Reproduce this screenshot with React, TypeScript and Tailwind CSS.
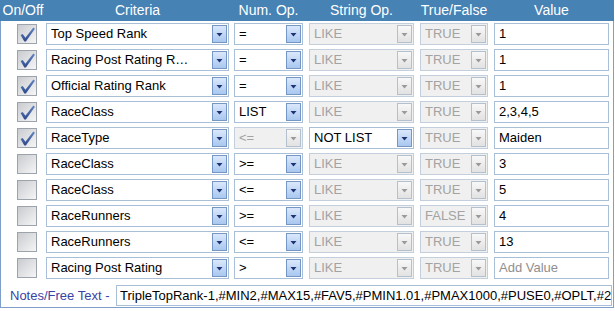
import clsx from "clsx";

type Row = {
  on: boolean;
  criteria: string;
  num: string;
  numOff?: boolean;
  str: string;
  strOn?: boolean;
  tf: string;
  value: string;
};

const rows: Row[] = [
  { on: true, criteria: "Top Speed Rank", num: "=", str: "LIKE", tf: "TRUE", value: "1" },
  { on: true, criteria: "Racing Post Rating R\u2026", num: "=", str: "LIKE", tf: "TRUE", value: "1" },
  { on: true, criteria: "Official Rating Rank", num: "=", str: "LIKE", tf: "TRUE", value: "1" },
  { on: true, criteria: "RaceClass", num: "LIST", str: "LIKE", tf: "TRUE", value: "2,3,4,5" },
  { on: true, criteria: "RaceType", num: "<=", numOff: true, str: "NOT LIST", strOn: true, tf: "TRUE", value: "Maiden" },
  { on: false, criteria: "RaceClass", num: ">=", str: "LIKE", tf: "TRUE", value: "3" },
  { on: false, criteria: "RaceClass", num: "<=", str: "LIKE", tf: "TRUE", value: "5" },
  { on: false, criteria: "RaceRunners", num: ">=", str: "LIKE", tf: "FALSE", value: "4" },
  { on: false, criteria: "RaceRunners", num: "<=", str: "LIKE", tf: "TRUE", value: "13" },
  { on: false, criteria: "Racing Post Rating", num: ">", str: "LIKE", tf: "TRUE", value: "" },
];

function Checkbox({ checked }: { checked: boolean }) {
  return (
    <div className="relative h-[20px] w-[20px] border border-[#9da3ab] bg-gradient-to-br from-[#c9cbcf] to-[#f6f6f7]">
      {checked && (
        <svg className="absolute left-[1px] top-[1px]" width="17" height="17" viewBox="0 0 16 16">
          <defs>
            <linearGradient id="ck" x1="0" y1="0" x2="0" y2="1">
              <stop offset="0" stopColor="#6484c4" />
              <stop offset="1" stopColor="#2c4a8c" />
            </linearGradient>
          </defs>
          <path d="M1.5 8.5 L3.5 7.5 L6 11 L13.5 1.5 L15 2.5 L6.5 14.5 L5 14.5 Z" fill="url(#ck)" />
        </svg>
      )}
    </div>
  );
}

function Select({ value, disabled, className }: { value: string; disabled?: boolean; className?: string }) {
  return (
    <div
      className={clsx(
        "flex h-[22px] items-center border pl-[4px] pr-[1px]",
        disabled ? "border-[#c4cfdd] bg-[#f0f0f0] text-[#a3a3a3]" : "border-[#a9bfd8] bg-white text-black",
        className
      )}
    >
      <span className="flex-1 overflow-hidden whitespace-nowrap">{value}</span>
      <span
        className={clsx(
          "flex h-[18px] w-[15px] items-center justify-center border",
          disabled
            ? "border-[#b3c0d0] bg-gradient-to-b from-[#f8f8f8] to-[#e2e2e2]"
            : "border-[#7597c8] bg-gradient-to-b from-[#dbe8fb] to-[#a9c7ef]"
        )}
      >
        <svg width="7" height="4" viewBox="0 0 7 4" className="mt-[2px]">
          <path d="M0.5 0h6L3.5 3.5z" fill={disabled ? "#9a9a9a" : "#1d3475"} />
        </svg>
      </span>
    </div>
  );
}

function TextBox({ value }: { value: string }) {
  return (
    <div className="flex h-[22px] w-[115px] items-center border border-[#a9bfd8] bg-white pl-[4px]">
      {value ? <span className="text-black">{value}</span> : <span className="text-[#8f8f8f]">Add Value</span>}
    </div>
  );
}

export default function App() {
  return (
    <div className="h-[311px] w-[615px] bg-white font-['Liberation_Sans',Arial,sans-serif] text-[13px]">
      <div className="w-[614px] border-x border-b border-[#7f9fca]">
        <div className="-mx-px flex h-[21px] items-center bg-[#4682b4] text-[14px] text-white">
          <div className="w-[46px] text-center">On/Off</div>
          <div className="w-[183px] text-center">Criteria</div>
          <div className="ml-[5px] w-[69px] text-center">Num. Op.</div>
          <div className="ml-[6px] w-[105px] text-center">String Op.</div>
          <div className="ml-[6px] w-[68px] text-center">True/False</div>
          <div className="ml-[6px] w-[115px] text-center">Value</div>
        </div>
        {rows.map((r, i) => (
          <div key={i} className="flex h-[26px] items-center">
            <div className="flex w-[45px] pl-[16px]">
              <Checkbox checked={r.on} />
            </div>
            <Select value={r.criteria} className="w-[183px]" />
            <Select value={r.num} disabled={r.numOff} className="ml-[5px] w-[69px]" />
            <Select value={r.str} disabled={!r.strOn} className="ml-[6px] w-[105px]" />
            <Select value={r.tf} disabled className="ml-[6px] w-[68px]" />
            <div className="ml-[6px]">
              <TextBox value={r.value} />
            </div>
          </div>
        ))}
        <div className="flex h-[26px] items-center pb-[1px] pt-[4px]">
          <span className="ml-[9px] w-[106px] whitespace-nowrap text-[#3844a4]">Notes/Free Text -</span>
          <div className="flex h-[21px] w-[496px] items-center overflow-hidden whitespace-nowrap border border-[#a9bfd8] bg-white pl-[3px] text-black">
            TripleTopRank-1,#MIN2,#MAX15,#FAV5,#PMIN1.01,#PMAX1000,#PUSE0,#OPLT,#2PLT
          </div>
        </div>
      </div>
    </div>
  );
}
